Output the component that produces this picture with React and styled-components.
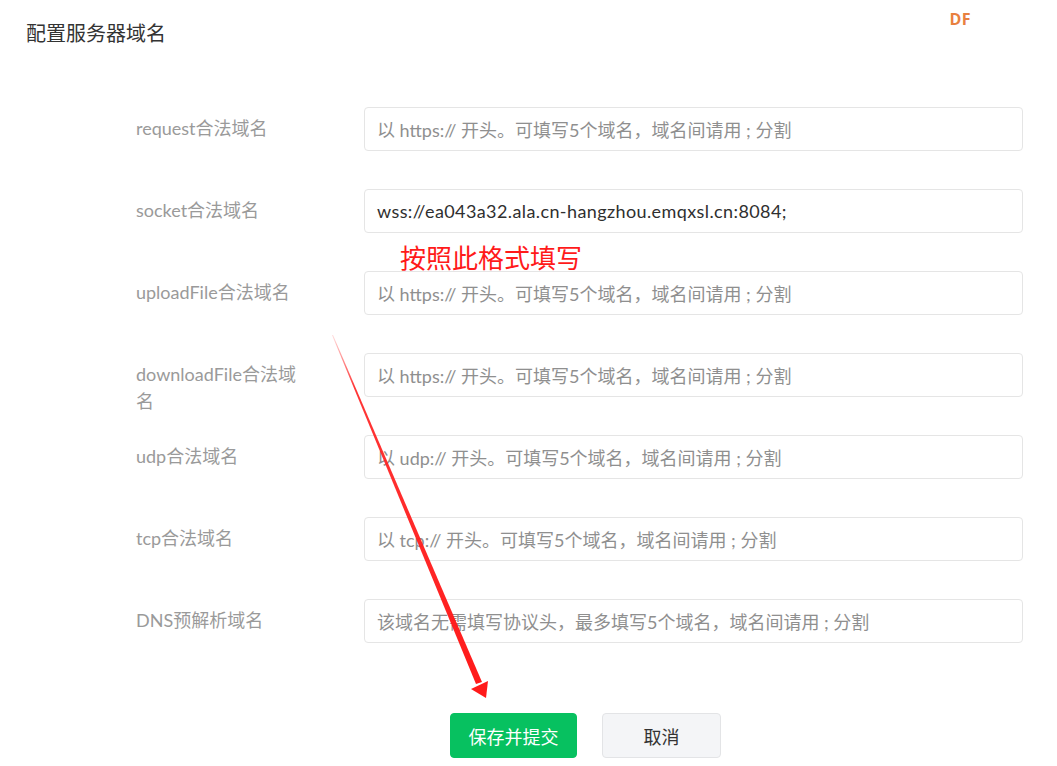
import React from "react";
import styled, { createGlobalStyle } from "styled-components";

const Global = createGlobalStyle`
  html, body { margin: 0; padding: 0; background: #fff; }
  body { font-family: Lato, "Noto Sans CJK SC", sans-serif; }
  * { box-sizing: border-box; }
`;

const Page = styled.div`
  position: relative;
  width: 1057px;
  height: 766px;
  overflow: hidden;
  background: #fff;
`;

const Header = styled.div`
  display: flex;
  justify-content: space-between;
  align-items: flex-start;
  padding: 19px 86px 0 26px;
  height: 107px;
`;

const Title = styled.h1`
  margin: 0;
  font-size: 20px;
  font-weight: 400;
  line-height: 28px;
  color: #333;
  font-family: "Noto Sans CJK SC", sans-serif;
`;

const Logo = styled.div`
  font-family: "Open Sans", "Noto Sans", sans-serif;
  font-weight: 700;
  font-size: 16px;
  line-height: 16px;
  margin-top: -8px;
  color: #e8803f;
  letter-spacing: 0.5px;
`;

const Form = styled.div`
  display: grid;
  grid-template-columns: 172px 1fr;
  grid-auto-rows: 44px;
  column-gap: 56px;
  row-gap: 38px;
  padding: 0 34px 0 136px;
`;

const Label = styled.div`
  font-size: 18px;
  line-height: 27px;
  color: #9a9a9a;
  padding-top: 8px;
  font-family: Lato, "Noto Sans CJK SC", sans-serif;
  overflow: visible;
`;

const Field = styled.div`
  height: 44px;
  border: 1px solid #e5e5e5;
  border-radius: 4px;
  padding: 0 12px;
  display: flex;
  align-items: center;
  font-size: 18px;
  color: ${(p) => (p.$filled ? "#2f2f2f" : "#8f8f8f")};
  letter-spacing: ${(p) => (p.$filled ? "0.4px" : "0")};
  white-space: nowrap;
  overflow: hidden;
  font-family: Lato, "Noto Sans CJK SC", sans-serif;
`;

const Actions = styled.div`
  display: flex;
  gap: 25px;
  padding-left: 450px;
  margin-top: 70px;
`;

const Button = styled.button`
  height: 45px;
  border-radius: 4px;
  font-size: 18px;
  font-family: "Noto Sans CJK SC", sans-serif;
  cursor: pointer;
  width: ${(p) => (p.$primary ? "127px" : "119px")};
  background: ${(p) => (p.$primary ? "#07c160" : "#f4f5f7")};
  color: ${(p) => (p.$primary ? "#fff" : "#333")};
  border: 1px solid ${(p) => (p.$primary ? "#07c160" : "#e3e4e6")};
`;

const Note = styled.div`
  position: absolute;
  left: 400px;
  top: 239px;
  font-size: 26px;
  line-height: 36px;
  color: #ff1a1a;
  font-family: "Noto Sans CJK SC", sans-serif;
`;

const ArrowLayer = styled.svg`
  position: absolute;
  left: 0;
  top: 0;
  pointer-events: none;
`;

const rows = [
  ["request合法域名", "以 https:// 开头。可填写5个域名，域名间请用 ; 分割"],
  ["socket合法域名", "wss://ea043a32.ala.cn-hangzhou.emqxsl.cn:8084;", true],
  ["uploadFile合法域名", "以 https:// 开头。可填写5个域名，域名间请用 ; 分割"],
  ["downloadFile合法域名", "以 https:// 开头。可填写5个域名，域名间请用 ; 分割"],
  ["udp合法域名", "以 udp:// 开头。可填写5个域名，域名间请用 ; 分割"],
  ["tcp合法域名", "以 tcp:// 开头。可填写5个域名，域名间请用 ; 分割"],
  ["DNS预解析域名", "该域名无需填写协议头，最多填写5个域名，域名间请用 ; 分割"],
];

export default function App() {
  return (
    <Page>
      <Global />
      <Header>
        <Title>配置服务器域名</Title>
        <Logo>DF</Logo>
      </Header>
      <Form>
        {rows.map(([label, text, filled]) => (
          <React.Fragment key={label}>
            <Label>{label}</Label>
            <Field $filled={filled}>{text}</Field>
          </React.Fragment>
        ))}
      </Form>
      <Actions>
        <Button $primary>保存并提交</Button>
        <Button>取消</Button>
      </Actions>
      <Note>按照此格式填写</Note>
      <ArrowLayer width="1057" height="766" viewBox="0 0 1057 766">
        <defs>
          <linearGradient id="fade" x1="332" y1="335" x2="480" y2="685" gradientUnits="userSpaceOnUse">
            <stop offset="0" stopColor="#ff2020" stopOpacity="0.15" />
            <stop offset="0.15" stopColor="#ff2020" stopOpacity="0.9" />
            <stop offset="1" stopColor="#ff1a1a" />
          </linearGradient>
        </defs>
        <polygon points="332,335 333,335 482,682 476,684" fill="url(#fade)" />
        <polygon points="471,689 486,698 488,681" fill="#ff1a1a" />
      </ArrowLayer>
    </Page>
  );
}
